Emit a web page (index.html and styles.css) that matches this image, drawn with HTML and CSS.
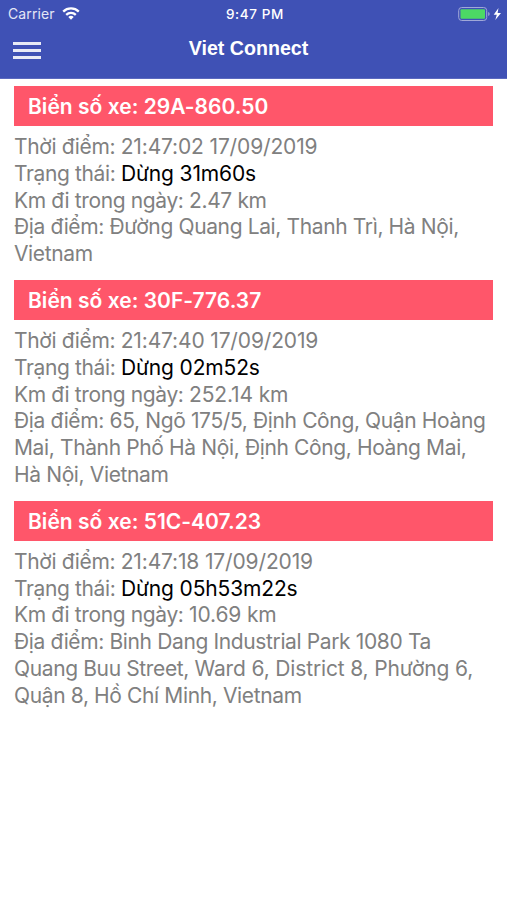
FILE: index.html
```html
<!DOCTYPE html>
<html lang="vi">
<head>
  <meta charset="utf-8">
  <title>Viet Connect</title>
  <link rel="stylesheet" href="styles.css">
</head>
<body>
  <header class="header">
    <div class="statusbar">
      <div class="carrier">
        <span>Carrier</span>
        <svg class="wifi" width="18" height="13" viewBox="0 0 18 13" fill="none" stroke="#fff" stroke-width="2.3">
          <path d="M1.2 4.6a11.2 11.2 0 0 1 15.6 0" />
          <path d="M4.2 7.8a7 7 0 0 1 9.6 0" />
          <path d="M9 12.8L6.3 10a4 4 0 0 1 5.4 0z" fill="#fff" stroke="none" />
        </svg>
      </div>
      <span class="time">9:47 PM</span>
      <div class="power">
        <svg width="44" height="14" viewBox="0 0 44 14">
          <rect x=".7" y=".5" width="28" height="13" rx="3" fill="none" stroke="#a0a8d8" />
          <rect x="2.5" y="2.3" width="24.5" height="9.4" rx="1" fill="#4cd964" />
          <path d="M30.2 5v4q1.5-.5 1.5-2t-1.5-2z" fill="#a0a8d8" />
          <path d="M40.5 1L35.7 7.8h3.1L37.3 13l5.7-7h-3.4z" fill="#fff" />
        </svg>
      </div>
    </div>
    <div class="navbar">
      <div class="menu">
        <span></span>
        <span></span>
        <span></span>
      </div>
      <h1>Viet Connect</h1>
    </div>
  </header>

  <div class="content">
    <div class="car">
      <h2>Biển số xe: 29A-860.50</h2>
      <p>Thời điểm: <span>21:47:02 17/09/2019</span></p>
      <p>Trạng thái: <b>Dừng 31m60s</b></p>
      <p>Km đi trong ngày: 2.47 km</p>
      <p>Địa điểm: Đường Quang Lai, Thanh Trì, Hà Nội,<br>Vietnam</p>
    </div>
    <div class="car">
      <h2>Biển số xe: 30F-776.37</h2>
      <p>Thời điểm: <span>21:47:40 17/09/2019</span></p>
      <p>Trạng thái: <b>Dừng 02m52s</b></p>
      <p>Km đi trong ngày: <span>252.14 km</span></p>
      <p>Địa điểm: 65, Ngõ 175/5, Định Công, Quận Hoàng<br>Mai, Thành Phố Hà Nội, Định Công, Hoàng Mai,<br>Hà Nội, Vietnam</p>
    </div>
    <div class="car">
      <h2>Biển số xe: 51C-407.23</h2>
      <p>Thời điểm: <span>21:47:18 17/09/2019</span></p>
      <p>Trạng thái: <b>Dừng 05h53m22s</b></p>
      <p>Km đi trong ngày: <span>10.69 km</span></p>
      <p>Địa điểm: Binh Dang Industrial Park 1080 Ta<br>Quang Buu Street, <span>Ward 6, District 8, Phường 6,</span><br>Quận 8, Hồ Chí Minh, Vietnam</p>
    </div>
  </div>
</body>
</html>
```

FILE: styles.css
```css
body {
  margin: 0;
  background-color: #fff;
  font-family: Inter, "Liberation Sans", sans-serif;
}

.header {
  box-sizing: border-box;
  height: 79px;
  border-bottom: 1px solid #5b69bf;
  background-color: #3f51b5;
  color: #fff;
}

.statusbar {
  display: grid;
  grid-template-columns: 1fr auto 1fr;
  align-items: center;
  height: 27px;
  padding: 0 5px 0 8px;
  font-size: 14px;
}

.carrier {
  display: flex;
  align-items: center;
  gap: 7px;
  letter-spacing: 0.1px;
  color: #e4e6f5;
}

.time {
  font-size: 13.5px;
  font-weight: 500;
  letter-spacing: 0.6px;
}

.power {
  display: flex;
  justify-content: flex-end;
}

.navbar {
  display: grid;
  grid-template-columns: 28px 1fr 38px;
  align-items: center;
  height: 43px;
  padding: 0 13px;
}

  .navbar h1 {
    margin: 0;
    font-family: "Liberation Sans", sans-serif;
    font-size: 19.6px;
    text-align: center;
  }

.menu {
  display: flex;
  flex-direction: column;
  gap: 4px;
  padding-top: 4px;
}

  .menu span {
    height: 3px;
    background-color: #e8eaf6;
  }

.content {
  padding: 7px 14px;
}

.car {
  margin-bottom: 12px;
  font-size: 21px;
  line-height: 26.8px;
  letter-spacing: -0.37px;
  color: #808080;
}

  .car h2 {
    margin: 0 0 8px;
    padding: 1px 14px 0;
    background-color: #ff566a;
    font-size: 21px;
    font-weight: 600;
    line-height: 39px;
    letter-spacing: 0.02px;
    color: #fff;
  }

  .car p {
    margin: 0;
    white-space: nowrap;
  }

  .car span,
  .car b {
    font-weight: 400;
    letter-spacing: -0.15px;
  }

  .car b {
    color: #000;
  }
```
